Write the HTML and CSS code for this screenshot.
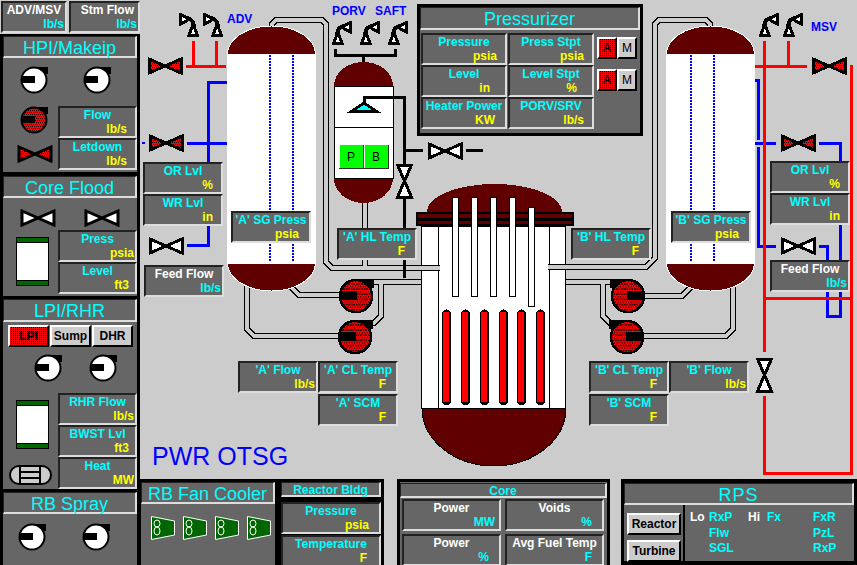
FILE: index.html
```html
<!DOCTYPE html>
<html lang="en">
<head>
  <meta charset="UTF-8" />
  <title>PWR OTSG</title>
  <link rel="stylesheet" href="styles.css">
</head>
<body>
  <!-- shared symbols -->
  <svg class="defs" xmlns="http://www.w3.org/2000/svg">
    <defs>
      <pattern id="dither" width="4" height="4" patternUnits="userSpaceOnUse" shape-rendering="crispEdges">
        <rect width="4" height="4" fill="#f00" />
        <rect width="1" height="1" fill="#200" />
        <rect x="2" y="0" width="1" height="1" fill="#200" />
        <rect x="1" y="2" width="1" height="1" fill="#200" />
        <rect x="3" y="2" width="1" height="1" fill="#200" />
      </pattern>
      <symbol id="pump-w" viewBox="0 0 28 28">
        <rect x="11" y="1" width="17" height="7" fill="#000" />
        <circle cx="14" cy="14" r="12.5" fill="#fff" stroke="#000" stroke-width="2" />
        <rect x="1" y="10" width="14" height="7" fill="#000" />
      </symbol>
      <symbol id="pump-r" viewBox="0 0 28 28">
        <rect x="11" y="1" width="17" height="7" fill="#000" />
        <circle cx="14" cy="14" r="12.5" fill="url(#dither)" stroke="#000" stroke-width="2" />
        <rect x="1" y="10" width="14" height="7" fill="#000" />
      </symbol>
      <symbol id="valve-w" viewBox="0 0 36 18">
        <path d="M2 2 L18 9 L2 16 Z M34 2 L18 9 L34 16 Z" fill="#fff" stroke="#000" stroke-width="3" />
      </symbol>
      <symbol id="valve-r" viewBox="0 0 36 18">
        <path d="M2 2 L18 9 L2 16 Z M34 2 L18 9 L34 16 Z" fill="url(#dither)" stroke="#000" stroke-width="3" />
      </symbol>
      <symbol id="relief" viewBox="0 0 20 24">
        <path d="M5 13 Q6 6 12 5" fill="none" stroke="#000" stroke-width="4" />
        <path d="M18.500 1.500 L18.500 11 L9 6 Z" fill="#fff" stroke="#000" stroke-width="3" />
        <path d="M1.500 22.500 L10 22.500 L6 11 Z" fill="#fff" stroke="#000" stroke-width="3" />
      </symbol>
      <symbol id="tank" viewBox="0 0 33 49">
        <rect x="0.5" y="0.5" width="32" height="48" fill="#fff" stroke="#000" />
        <rect x="1" y="1" width="31" height="4" fill="#060" />
        <rect x="1" y="44" width="31" height="4" fill="#060" />
        <path d="M1 5.5 H32 M1 43.5 H32" stroke="#000" />
      </symbol>
      <symbol id="fan" viewBox="0 0 24 24">
        <path d="M0.5 0.5 L23.5 5 L23.5 19 L0.5 23.5 Z" fill="#060" stroke="#fff" />
        <ellipse cx="6" cy="7.5" rx="3" ry="3.5" fill="none" stroke="#fff" />
        <ellipse cx="6" cy="15" rx="3" ry="4" fill="none" stroke="#fff" />
      </symbol>
      <g id="fuel">
        <path d="M0 3 L4.5 0 L9 3 V94 L6 96 H3 L0 94 Z" fill="#000" />
        <rect x="1" y="3" width="6" height="90" fill="#f00" />
      </g>
    </defs>
  </svg>

  <div class="screen">
    <aside class="side">
      <div class="side-top">
        <div class="gauge alt r3 top-a"><div>ADV/MSV</div><div class="unit">lb/s</div></div>
        <div class="gauge alt r3 top-b"><div class="shift">Stm Flow</div><div class="unit">lb/s</div></div>
      </div>

      <section class="panel hpi">
        <h2 class="title">HPI/Makeip</h2>
        <div class="pumps pumps-hpi">
          <svg class="pump"><use href="#pump-w" /></svg>
          <svg class="pump"><use href="#pump-w" /></svg>
        </div>
        <div class="split split-hpi">
          <div class="split-left">
            <svg class="pump hpi-pump"><use href="#pump-r" /></svg>
            <svg class="valve hpi-valve"><use href="#valve-r" /></svg>
          </div>
          <div>
            <div class="gauge r10"><div>Flow</div><div class="unit">lb/s</div></div>
            <div class="gauge r10"><div>Letdown</div><div class="unit">lb/s</div></div>
          </div>
        </div>
      </section>

      <section class="panel flood">
        <h2 class="title">Core Flood</h2>
        <div class="valves">
          <svg class="valve"><use href="#valve-w" /></svg>
          <svg class="valve"><use href="#valve-w" /></svg>
        </div>
        <div class="split split-flood">
          <div class="split-left">
            <svg class="tank"><use href="#tank" /></svg>
          </div>
          <div>
            <div class="gauge r3"><div>Press</div><div class="unit">psia</div></div>
            <div class="gauge r8"><div>Level</div><div class="unit">ft3</div></div>
          </div>
        </div>
      </section>

      <section class="panel lpi">
        <h2 class="title title-lpi">LPI/RHR</h2>
        <div class="modes">
          <div class="btn btn-on">LPI</div>
          <div class="btn">Sump</div>
          <div class="btn">DHR</div>
        </div>
        <div class="pumps pumps-lpi">
          <svg class="pump"><use href="#pump-w" /></svg>
          <svg class="pump"><use href="#pump-w" /></svg>
        </div>
        <div class="split split-lpi">
          <div class="split-left">
            <svg class="tank"><use href="#tank" /></svg>
            <svg class="hx" viewBox="0 0 43 20">
              <rect x="1" y="1" width="41" height="18" rx="9" fill="#ccc" stroke="#000" stroke-width="2" />
              <path d="M11 1 V19 M31 1 V19" stroke="#000" stroke-width="2" />
              <path d="M11 7 H31 M11 13 H31" stroke="#000" stroke-width="2" />
            </svg>
          </div>
          <div>
            <div class="gauge r3"><div>RHR Flow</div><div class="unit">lb/s</div></div>
            <div class="gauge r8"><div>BWST Lvl</div><div class="unit">ft3</div></div>
            <div class="gauge r3"><div>Heat</div><div class="unit">MW</div></div>
          </div>
        </div>
      </section>

      <section class="panel spray">
        <h2 class="title">RB Spray</h2>
        <div class="pumps pumps-spray">
          <svg class="pump"><use href="#pump-w" /></svg>
          <svg class="pump"><use href="#pump-w" /></svg>
        </div>
      </section>
    </aside>

    <main class="main">
      <div class="canvas">
        <svg class="plant" viewBox="140 0 717 479" xmlns="http://www.w3.org/2000/svg">
          <!-- steam and feed lines -->
          <path class="blue" d="M227 82 H208 V245 H187 M187 143 H227 M143 142 V144" />
          <path class="blue" d="M755 80 H758 V140 M758 147 V246 H776 M755 143 H776 M819 143 H840 V316 H827 V246 H819" />
          <path class="red" d="M193 41 V66 M216 41 V66 M186 66 H226" />
          <path class="red" d="M755 66 H807 M788 41 V66 M764 41 V352 M764 396 V473 H851 V65 M764 298 H851" />

          <!-- coolant pipes -->
          <path class="pipe-out" d="M272 40 V24 L276 20 H322 L326 24 V262 L332 268 H425 M365 200 V268 M710 40 V24 L706 20 H659 L655 24 V258 L646 267 H545 M425 282 H370 M381 282 V316 L374 323 H370 M292 280 V288 L299 295 H340 M247 285 V329 L254 336 H340 M545 282 H612 M603 282 V316 L610 323 H614 M690 280 V288 L682 296 H640 M733 285 V329 L726 336 H640" />
          <path class="pipe-in" d="M272 40 V24 L276 20 H322 L326 24 V262 L332 268 H425 M365 200 V268 M710 40 V24 L706 20 H659 L655 24 V258 L646 267 H545 M425 282 H370 M381 282 V316 L374 323 H370 M292 280 V288 L299 295 H340 M247 285 V329 L254 336 H340 M545 282 H612 M603 282 V316 L610 323 H614 M690 280 V288 L682 296 H640 M733 285 V329 L726 336 H640" />

          <!-- steam generators -->
          <rect class="sg-body" x="227" y="54" width="89" height="209" />
          <path class="sg-cap" d="M227.5 54 A44 28 0 0 1 315.5 54 Z" />
          <path class="sg-cap" d="M227.5 263 A44 28 0 0 0 315.5 263 Z" />
          <path class="level" d="M270 55 V262 M293 55 V262" />
          <rect class="sg-body" x="666" y="54" width="89" height="209" />
          <path class="sg-cap" d="M666.5 54 A44 28 0 0 1 754.5 54 Z" />
          <path class="sg-cap" d="M666.5 263 A44 28 0 0 0 754.5 263 Z" />
          <path class="level" d="M691 55 V262 M714 55 V262" />

          <!-- pressurizer -->
          <path class="ctl" d="M335 49 V55 H395 V49 M363.500 55 V62" />
          <path class="cap" d="M334 86 A29.500 24 0 0 1 393 86 Z" />
          <path class="cap" d="M334 178 A29.500 25 0 0 0 393 178 Z" />
          <rect class="vessel" x="334.500" y="86.500" width="59" height="92" />
          <path class="thin" d="M334 127.500 H393" />
          <path class="ctl" d="M364 104 V97 H404 V164 M404 150 H423 M466 150 H483 M404 198 V278" />
          <path d="M352 111 L364 103 L376 111 Z" fill="#0ff" stroke="#000" stroke-width="3" />
          <rect class="green" x="340" y="145" width="23" height="23" />
          <rect class="green" x="365" y="145" width="23" height="23" />
          <path class="raise" d="M339 168.500 H363.500 V145 M364 168.500 H388.500 V145" />
          <text class="btn-label" x="351" y="161">P</text>
          <text class="btn-label" x="376" y="161">B</text>

          <!-- reactor vessel -->
          <path class="cap" d="M427 212 A67.500 28 0 0 1 562 212 Z" />
          <path class="cap" d="M422 408 A72 58 0 0 0 566 408 Z" stroke="#000" />
          <rect class="vessel" x="421.500" y="226.500" width="144" height="181.500" />
          <path class="thin" d="M438.500 226 V408 M549.500 226 V408" />
          <rect class="flange" x="417" y="213" width="156" height="12" />
          <path class="ctl" d="M417 219 H573" />
          <rect class="rod" x="452.500" y="197.500" width="6" height="99" />
          <rect class="rod" x="471.500" y="197.500" width="6" height="99" />
          <rect class="rod" x="490.500" y="197.500" width="6" height="99" />
          <rect class="rod" x="509.500" y="197.500" width="6" height="99" />
          <rect class="rod" x="528.500" y="207.500" width="6" height="99" />
          <use href="#fuel" x="442" y="309" />
          <use href="#fuel" x="461" y="309" />
          <use href="#fuel" x="480" y="309" />
          <use href="#fuel" x="499" y="309" />
          <use href="#fuel" x="517" y="309" />
          <use href="#fuel" x="536" y="309" />
          <path class="pipe-out" d="M420 268 H440 M568 267 H548" />
          <path class="pipe-in" d="M420 268 H440 M568 267 H548" />

          <!-- pumps, valves, reliefs -->
          <use href="#pump-r" x="338" y="278" width="36" height="36" />
          <use href="#pump-r" x="337" y="319" width="36" height="36" />
          <use href="#pump-r" x="0" y="0" width="36" height="36" transform="translate(646 278) scale(-1 1)" />
          <use href="#pump-r" x="0" y="0" width="36" height="36" transform="translate(645 319) scale(-1 1)" />

          <use href="#valve-r" x="147" y="57" width="36" height="18" />
          <use href="#valve-r" x="148" y="134" width="36" height="18" />
          <use href="#valve-w" x="148" y="237" width="36" height="18" />
          <use href="#valve-w" x="427" y="142" width="36" height="18" />
          <use href="#valve-r" x="811" y="57" width="36" height="18" />
          <use href="#valve-r" x="780" y="134" width="36" height="18" />
          <use href="#valve-w" x="780" y="237" width="36" height="18" />
          <use href="#valve-w" x="0" y="0" width="36" height="18" transform="translate(413.500 163) rotate(90)" />
          <use href="#valve-w" x="0" y="0" width="36" height="18" transform="translate(773.500 357) rotate(90)" />

          <use href="#relief" x="0" y="0" width="20" height="24" transform="translate(199 13) scale(-1 1)" />
          <use href="#relief" x="0" y="0" width="20" height="24" transform="translate(223 13) scale(-1 1)" />
          <use href="#relief" x="332" y="21" width="20" height="24" />
          <use href="#relief" x="360" y="21" width="20" height="24" />
          <use href="#relief" x="388" y="21" width="20" height="24" />
          <use href="#relief" x="759" y="13" width="20" height="24" />
          <use href="#relief" x="783" y="13" width="20" height="24" />

          <text class="tag" x="227" y="23">ADV</text>
          <text class="tag" x="332" y="15">PORV</text>
          <text class="tag" x="375" y="15">SAFT</text>
          <text class="tag" x="811" y="31">MSV</text>
          <text class="name" x="152" y="465">PWR OTSG</text>
        </svg>

        <div class="gauge pos or-a r10"><div>OR Lvl</div><div class="unit">%</div></div>
        <div class="gauge pos wr-a r10"><div>WR Lvl</div><div class="unit">in</div></div>
        <div class="gauge pos feed-a alt r3"><div>Feed Flow</div><div class="unit">lb/s</div></div>
        <div class="gauge pos sg-a r12"><div>'A' SG Press</div><div class="unit">psia</div></div>
        <div class="gauge pos hl-a r12"><div>'A' HL Temp</div><div class="unit">F</div></div>
        <div class="gauge pos flow-a r3"><div>'A' Flow</div><div class="unit">lb/s</div></div>
        <div class="gauge pos cl-a r12"><div>'A' CL Temp</div><div class="unit">F</div></div>
        <div class="gauge pos scm-a r12"><div>'A' SCM</div><div class="unit">F</div></div>
        <div class="gauge pos hl-b r12"><div>'B' HL Temp</div><div class="unit">F</div></div>
        <div class="gauge pos cl-b r12"><div>'B' CL Temp</div><div class="unit">F</div></div>
        <div class="gauge pos scm-b r12"><div>'B' SCM</div><div class="unit">F</div></div>
        <div class="gauge pos flow-b r3"><div>'B' Flow</div><div class="unit">lb/s</div></div>
        <div class="gauge pos sg-b r12"><div>'B' SG Press</div><div class="unit">psia</div></div>
        <div class="gauge pos feed-b alt r3"><div>Feed Flow</div><div class="unit">lb/s</div></div>
        <div class="gauge pos or-b r10"><div>OR Lvl</div><div class="unit">%</div></div>
        <div class="gauge pos wr-b r10"><div>WR Lvl</div><div class="unit">in</div></div>

        <section class="przr">
          <h2 class="title">Pressurizer</h2>
          <div class="przr-body">
            <div class="przr-grid">
              <div class="gauge r10"><div>Pressure</div><div class="unit">psia</div></div>
              <div class="gauge r10"><div>Press Stpt</div><div class="unit">psia</div></div>
              <div class="gauge r17"><div>Level</div><div class="unit">in</div></div>
              <div class="gauge r17"><div>Level Stpt</div><div class="unit">%</div></div>
              <div class="gauge r12"><div>Heater Power</div><div class="unit">KW</div></div>
              <div class="gauge r10"><div>PORV/SRV</div><div class="unit">lb/s</div></div>
            </div>
            <div class="am-stack">
              <div class="am"><div class="btn btn-on am-btn">A</div><div class="btn am-btn">M</div></div>
              <div class="am"><div class="btn btn-on am-btn">A</div><div class="btn am-btn">M</div></div>
            </div>
          </div>
        </section>
      </div>

      <div class="bottom">
        <div class="rb-group">
          <section class="fan">
            <h2 class="title">RB Fan Cooler</h2>
            <div class="fans">
              <svg class="fan-icon"><use href="#fan" /></svg>
              <svg class="fan-icon"><use href="#fan" /></svg>
              <svg class="fan-icon"><use href="#fan" /></svg>
              <svg class="fan-icon"><use href="#fan" /></svg>
            </div>
          </section>
          <section class="bldg">
            <h3 class="mini-title">Reactor Bldg</h3>
            <div class="gauge r12 bldg-g"><div>Pressure</div><div class="unit">psia</div></div>
            <div class="gauge r14 bldg-g"><div>Temperature</div><div class="unit">F</div></div>
          </section>
        </div>

        <section class="core">
          <h3 class="mini-title">Core</h3>
          <div class="core-grid">
            <div class="gauge alt r6"><div>Power</div><div class="unit">MW</div></div>
            <div class="gauge alt r12"><div>Voids</div><div class="unit">%</div></div>
            <div class="gauge alt r12"><div>Power</div><div class="unit">%</div></div>
            <div class="gauge alt r12"><div>Avg Fuel Temp</div><div class="unit">F</div></div>
          </div>
        </section>

        <section class="rps">
          <h2 class="title">RPS</h2>
          <div class="rps-body">
            <div class="rps-btns">
              <div class="btn rps-btn">Reactor</div>
              <div class="btn rps-btn">Turbine</div>
            </div>
            <div class="trips">
              <span class="trip-key">Lo</span><span>RxP</span><span class="trip-key">Hi</span><span>Fx</span><span>FxR</span>
              <span></span><span>Flw</span><span></span><span></span><span>PzL</span>
              <span></span><span>SGL</span><span></span><span></span><span>RxP</span>
            </div>
          </div>
        </section>
      </div>
    </main>
  </div>
</body>
</html>
```

FILE: styles.css
```css
* {
  box-sizing: border-box;
}
body {
  margin: 0;
  background: #ccc;
  font-family: "Liberation Sans", Arial, sans-serif;
  overflow: hidden;
}
.defs {
  position: absolute;
  width: 0;
  height: 0;
}
.screen {
  display: flex;
  width: 857px;
  height: 565px;
  overflow: hidden;
}

/* readouts */
.gauge {
  width: 80px;
  height: 32px;
  background: #666;
  border: 2px solid;
  border-color: #222 #ddd #ddd #222;
  color: #0ff;
  font-size: 12px;
  font-weight: bold;
  line-height: 14px;
  text-align: center;
  white-space: nowrap;
}
.unit {
  color: #ff0;
  text-align: right;
}
.alt {
  color: #fff;
}
.alt .unit {
  color: #0ff;
}
.r3 .unit { padding-right: 1px; }
.r6 .unit { padding-right: 4px; }
.r8 .unit { padding-right: 6px; }
.r10 .unit { padding-right: 8px; }
.r12 .unit { padding-right: 10px; }
.r14 .unit { padding-right: 12px; }
.r17 .unit { padding-right: 15px; }

.title {
  height: 22px;
  margin: 0;
  background: #666;
  border: 1px solid;
  border-width: 1px 2px 2px 1px;
  border-color: #222 #ddd #ddd #222;
  color: #0ff;
  font-size: 18px;
  font-weight: normal;
  line-height: 22px;
  text-align: center;
}
.title-lpi {
  height: 23px;
}
.mini-title {
  height: 15px;
  margin: 0;
  background: #666;
  border: 1px solid;
  border-width: 1px 2px 2px 1px;
  border-color: #222 #ddd #ddd #222;
  color: #0ff;
  font-size: 12px;
  font-weight: bold;
  line-height: 14px;
  text-align: center;
}

/* buttons */
.btn {
  background: #ccc;
  border: 2px solid;
  border-color: #fff #000 #000 #fff;
  color: #000;
  font-size: 12px;
  font-weight: bold;
  line-height: 18px;
  text-align: center;
}
.btn-on {
  background: repeating-conic-gradient(#200 0 25%, #f00 0 100%) 0 0 / 2px 2px;
}

/* left column */
.side {
  flex: none;
  width: 140px;
  background: #000;
}
.side-top {
  display: flex;
  gap: 2px;
  height: 34px;
  padding-top: 1px;
  padding-bottom: 1px;
  padding-left: 1px;
  background: #ccc;
}
.top-a {
  width: 66px;
}
.top-b {
  width: 71px;
}
.shift {
  padding-right: 4px;
  text-align: right;
}
.panel {
  width: 134px;
  margin-left: 3px;
  background: #666;
}
.hpi {
  height: 136px;
  margin-top: 2px;
}
.flood {
  height: 120px;
  margin-top: 4px;
}
.lpi {
  height: 190px;
  margin-top: 3px;
}
.spray {
  height: 73px;
  margin-top: 3px;
}
.pumps {
  display: flex;
}
.pump {
  display: block;
  flex: none;
  width: 28px;
  height: 28px;
}
.pumps-hpi {
  gap: 35px;
  margin-top: 8px;
  padding-left: 17px;
}
.pumps-lpi {
  gap: 27px;
  margin-top: 7px;
  padding-left: 31px;
}
.pumps-spray {
  gap: 36px;
  margin-top: 9px;
  padding-left: 15px;
}
.split {
  display: grid;
  grid-template-columns: 55px 79px;
}
.split .gauge {
  width: 79px;
}
.split-left {
  display: flex;
  flex-direction: column;
}
.split-hpi {
  margin-top: 12px;
}
.split-flood {
  margin-top: 3px;
}
.split-lpi {
  margin-top: 11px;
}
.hpi-pump {
  margin-left: 17px;
}
.valve {
  display: block;
  flex: none;
  width: 36px;
  height: 18px;
}
.hpi-valve {
  margin-top: 11px;
  margin-left: 14px;
}
.valves {
  display: flex;
  gap: 28px;
  margin-top: 11px;
  padding-left: 17px;
}
.tank {
  display: block;
  width: 33px;
  height: 49px;
  margin-top: 7px;
  margin-left: 13px;
}
.hx {
  display: block;
  width: 43px;
  height: 20px;
  margin-top: 16px;
  margin-left: 6px;
}
.modes {
  display: flex;
  gap: 1px;
  width: 125px;
  margin-top: 3px;
  margin-left: 5px;
}
.modes .btn {
  width: 41px;
  height: 22px;
}

/* schematic */
.main {
  display: flex;
  flex-direction: column;
  flex: 1;
}
.canvas {
  position: relative;
  height: 479px;
}
.plant {
  position: absolute;
  top: 0;
  left: 0;
  width: 717px;
  height: 479px;
  shape-rendering: crispEdges;
}
.red, .blue, .ctl, .pipe-out, .pipe-in, .level, .thin, .raise {
  fill: none;
}
.red {
  stroke: #f00;
  stroke-width: 3;
}
.blue {
  stroke: #00f;
  stroke-width: 3;
}
.pipe-out {
  stroke: #000;
  stroke-width: 6;
}
.pipe-in {
  stroke: #ccc;
  stroke-width: 4;
}
.sg-body {
  fill: #fff;
}
.sg-cap {
  fill: #600000;
  stroke: #fff;
}
.cap {
  fill: #600000;
}
.level {
  stroke: #00f;
  stroke-width: 2;
  stroke-dasharray: 2 1;
}
.vessel {
  fill: #fff;
  stroke: #000;
}
.thin {
  stroke: #000;
}
.ctl {
  stroke: #000;
  stroke-width: 3;
}
.green {
  fill: #0f0;
}
.raise {
  stroke: #333;
}
.btn-label {
  fill: #000;
  font-size: 12px;
  text-anchor: middle;
}
.flange {
  fill: #600000;
  stroke: #000;
  stroke-width: 2;
}
.rod {
  fill: #fff;
  stroke: #000;
}
.tag {
  fill: #00f;
  font-size: 12px;
  font-weight: bold;
}
.name {
  fill: #00f;
  font-size: 25px;
}

/* readouts on the schematic */
.pos {
  position: absolute;
}
.or-a { left: 3px; top: 162px; }
.wr-a { left: 3px; top: 194px; }
.feed-a { left: 4px; top: 265px; }
.sg-a { left: 91px; top: 211px; }
.hl-a { left: 197px; top: 228px; }
.flow-a { left: 98px; top: 361px; }
.cl-a { left: 178px; top: 361px; }
.scm-a { left: 178px; top: 394px; }
.hl-b { left: 431px; top: 228px; }
.cl-b { left: 449px; top: 361px; }
.scm-b { left: 449px; top: 394px; }
.flow-b { left: 529px; top: 361px; }
.sg-b { left: 531px; top: 211px; }
.feed-b { left: 630px; top: 260px; }
.or-b { left: 630px; top: 161px; }
.wr-b { left: 630px; top: 193px; }

/* pressurizer panel */
.przr {
  position: absolute;
  top: 4px;
  left: 277px;
  width: 226px;
  height: 132px;
  background: #666;
  border: 3px solid #000;
}
.przr .title {
  height: 23px;
  line-height: 23px;
}
.przr-body {
  display: flex;
  gap: 3px;
  padding-top: 3px;
  padding-left: 1px;
}
.przr-grid {
  display: grid;
  grid-template-columns: 86px 86px;
  gap: 0 1px;
  width: 173px;
}
.przr-grid .gauge {
  width: 86px;
}
.am-stack {
  display: flex;
  flex-direction: column;
  gap: 10px;
  padding-top: 4px;
}
.am {
  display: flex;
}
.am-btn {
  width: 20px;
  height: 22px;
  font-weight: normal;
}

/* bottom row */
.bottom {
  display: flex;
  height: 86px;
}
.rb-group {
  display: flex;
  width: 244px;
  padding-top: 3px;
  background: #000;
}
.fan {
  width: 134px;
  margin-left: 1px;
  background: #666;
}
.fans {
  display: flex;
  gap: 8px;
  margin-top: 12px;
  padding-left: 10px;
}
.fan-icon {
  display: block;
  width: 24px;
  height: 24px;
}
.bldg {
  width: 100px;
  margin-left: 6px;
}
.bldg-g {
  width: 100px;
  margin-bottom: 1px;
}
.bldg .mini-title {
  margin-bottom: 5px;
}
.core {
  width: 213px;
  margin-left: 13px;
  padding-top: 1px;
  background: #666;
  border: 3px solid #000;
  border-bottom: 0;
}
.core-grid {
  display: grid;
  grid-template-columns: 99px 99px;
  gap: 3px 4px;
  padding-top: 1px;
  padding-left: 2px;
}
.core-grid .gauge {
  width: 99px;
}
.rps {
  width: 236px;
  margin-left: 11px;
  padding: 4px 3px 0;
  background: #000;
}
.rps .title {
  letter-spacing: 1px;
}
.rps-body {
  display: flex;
  height: 56px;
  background: #000;
}
.rps-btns {
  display: flex;
  flex-direction: column;
  gap: 5px;
  width: 59px;
  padding-top: 8px;
  padding-left: 3px;
  background: #666;
}
.rps-btn {
  width: 54px;
  height: 23px;
  color: #000;
  font-size: 12px;
}
.trips {
  display: grid;
  grid-template-columns: 19px 39px 19px 46px 1fr;
  grid-auto-rows: 15.5px;
  flex: 1;
  margin-left: 2px;
  padding-top: 5px;
  padding-left: 5px;
  background: #666;
  color: #0ff;
  font-size: 12px;
  font-weight: bold;
  line-height: 15px;
}
.trip-key {
  color: #fff;
}
```
